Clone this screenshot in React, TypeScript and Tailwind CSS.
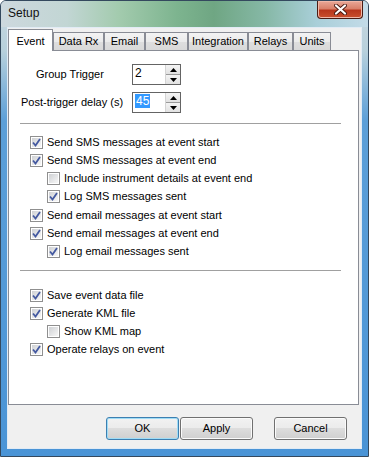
import React from 'react';

const font = { fontFamily: '"Liberation Sans", Arial, sans-serif' };

function Check({ checked }: { checked: boolean }) {
  return (
    <span className="w-[13px] h-[13px] border border-[#8f8f8f] bg-white p-px flex shrink-0">
      <span className="flex-1 bg-gradient-to-br from-[#cfd1d4] to-[#f7f7f7] flex items-center justify-center">
        {checked && (
          <svg width="9" height="9" viewBox="0 0 9 9">
            <path d="M1 4.5 L3.5 7.5 L8 1" fill="none" stroke="#4459a0" strokeWidth="1.8" />
          </svg>
        )}
      </span>
    </span>
  );
}

function Row({ label, checked, indent }: { label: string; checked: boolean; indent?: boolean }) {
  return (
    <div className={`h-[18px] flex items-center gap-[4px] ${indent ? 'pl-[38px]' : 'pl-[21px]'}`}>
      <Check checked={checked} />
      <span className="text-[11px] text-black leading-none">{label}</span>
    </div>
  );
}

function Spin({ value, selected }: { value: string; selected?: boolean }) {
  return (
    <div className="w-[49px] h-[21px] border border-[#646464] bg-white flex">
      <div className="flex-1 pl-[2px] pt-[2px] text-[12px] leading-none">
        <span className={selected ? 'bg-[#3399ff] text-white px-px' : 'text-black'}>{value}</span>
      </div>
      <div className="w-[15px] flex flex-col border-l border-[#d4d4d4]">
        <div className="flex-1 bg-gradient-to-b from-[#f4f4f4] to-[#e2e2e2] border-b border-[#9a9a9a] flex items-center justify-center">
          <svg width="7" height="4" viewBox="0 0 7 4"><path d="M0 4 L3.5 0 L7 4 Z" fill="#000" /></svg>
        </div>
        <div className="flex-1 bg-gradient-to-b from-[#f4f4f4] to-[#e2e2e2] flex items-center justify-center">
          <svg width="7" height="4" viewBox="0 0 7 4"><path d="M0 0 L3.5 4 L7 0 Z" fill="#000" /></svg>
        </div>
      </div>
    </div>
  );
}

function Button({ label, primary, className }: { label: string; primary?: boolean; className?: string }) {
  return (
    <div
      className={`w-[73px] h-[23px] rounded-[3px] border ${
        primary ? 'border-[#3c7fb1] shadow-[inset_0_0_0_1px_#9fdcf6]' : 'border-[#707070] shadow-[inset_0_0_0_1px_#fbfbfb]'
      } bg-[linear-gradient(180deg,#f2f2f2_0%,#ebebeb_50%,#dddddd_50%,#cfcfcf_100%)] flex items-center justify-center text-[11px] text-black ${className ?? ''}`}
    >
      {label}
    </div>
  );
}

const tabs = [
  { label: 'Data Rx', w: 'w-[51px]' },
  { label: 'Email', w: 'w-[41px]' },
  { label: 'SMS', w: 'w-[43px]' },
  { label: 'Integration', w: 'w-[60px]' },
  { label: 'Relays', w: 'w-[45px]' },
  { label: 'Units', w: 'w-[38px]' },
];

export default function App() {
  return (
    <div
      style={font}
      className="w-[369px] h-[457px] flex flex-col border border-[#34495e] rounded-t-[6px] overflow-hidden bg-[linear-gradient(180deg,#c9d8e0_0px,#b7d0dc_50px,#5c9fd8_120px,#4a94d6_100%)]"
    >
      {/* title bar */}
      <div className="h-[26px] flex justify-between items-start bg-[linear-gradient(90deg,#cdd8de_0%,#c2d6d4_18%,#a3cbae_32%,#7db48f_48%,#6fa683_58%,#86b8a6_72%,#a9cfd9_86%,#c3dbe8_100%)]">
        <span className="pl-[7px] pt-[6px] text-[12px] text-[#111] leading-none">Setup</span>
        <div className="mr-[5px] w-[46px] h-[18px] rounded-b-[4px] border border-t-0 border-[#4a1c14] bg-[linear-gradient(180deg,#e9a898_0%,#d8806a_45%,#b8361c_55%,#c9502e_100%)] flex items-center justify-center shadow-[inset_0_0_0_1px_#f0b7a8]">
          <svg width="13" height="11" viewBox="0 0 13 11">
            <path d="M2 1.5 L11 9.5 M11 1.5 L2 9.5" stroke="#4a1a12" strokeWidth="4" strokeLinecap="round" />
            <path d="M2 1.5 L11 9.5 M11 1.5 L2 9.5" stroke="#fff" strokeWidth="2.2" strokeLinecap="round" />
          </svg>
        </div>
      </div>

      {/* client */}
      <div className="flex-1 px-[6px] pb-[7px] flex">
        <div className="flex-1 border border-[#e1ebf5] bg-[#f0f0f0] flex flex-col">
          <div className="mt-px mr-[2px] flex flex-col">
            <div className="h-[21px] flex items-end">
              <div className="relative z-10 w-[45px] h-[22px] -mb-px bg-white border border-b-0 border-[#898c95] flex items-center justify-center text-[11px] text-black pt-[1px]">
                Event
              </div>
              {tabs.map((t) => (
                <div
                  key={t.label}
                  className={`${t.w} h-[18px] border border-b-0 border-[#898c95] bg-[linear-gradient(180deg,#f3f3f3_0%,#ebebeb_50%,#dedede_50%,#d9d9d9_100%)] flex items-center justify-center text-[11px] text-black`}
                >
                  {t.label}
                </div>
              ))}
            </div>

            <div className="h-[355px] bg-white border border-[#898c95] flex flex-col">
              <div className="mt-[13px] h-[21px] flex items-center">
                <span className="w-[123px] pl-[27px] text-[11px] text-black">Group Trigger</span>
                <Spin value="2" />
              </div>
              <div className="mt-[7px] h-[21px] flex items-center">
                <span className="w-[123px] pl-[12px] text-[11px] text-black">Post-trigger delay (s)</span>
                <Spin value="45" selected />
              </div>

              <div className="mt-[10px] ml-[11px] w-[321px] h-px bg-[#a0a0a0]" />

              <div className="mt-[9px] flex flex-col">
                <Row label="Send SMS messages at event start" checked />
                <Row label="Send SMS messages at event end" checked />
                <Row label="Include instrument details at event end" checked={false} indent />
                <Row label="Log SMS messages sent" checked indent />
              </div>
              <div className="mt-px flex flex-col">
                <Row label="Send email messages at event start" checked />
                <Row label="Send email messages at event end" checked />
                <Row label="Log email messages sent" checked indent />
              </div>

              <div className="mt-[10px] ml-[11px] w-[321px] h-px bg-[#a0a0a0]" />

              <div className="mt-[15px] flex flex-col">
                <Row label="Save event data file" checked />
                <Row label="Generate KML file" checked />
                <Row label="Show KML map" checked={false} indent />
                <Row label="Operate relays on event" checked />
              </div>
            </div>
          </div>

          <div className="mt-[12px] flex">
            <Button label="OK" primary className="ml-[98px]" />
            <Button label="Apply" className="ml-px" />
            <Button label="Cancel" className="ml-[21px]" />
          </div>
        </div>
      </div>
    </div>
  );
}
